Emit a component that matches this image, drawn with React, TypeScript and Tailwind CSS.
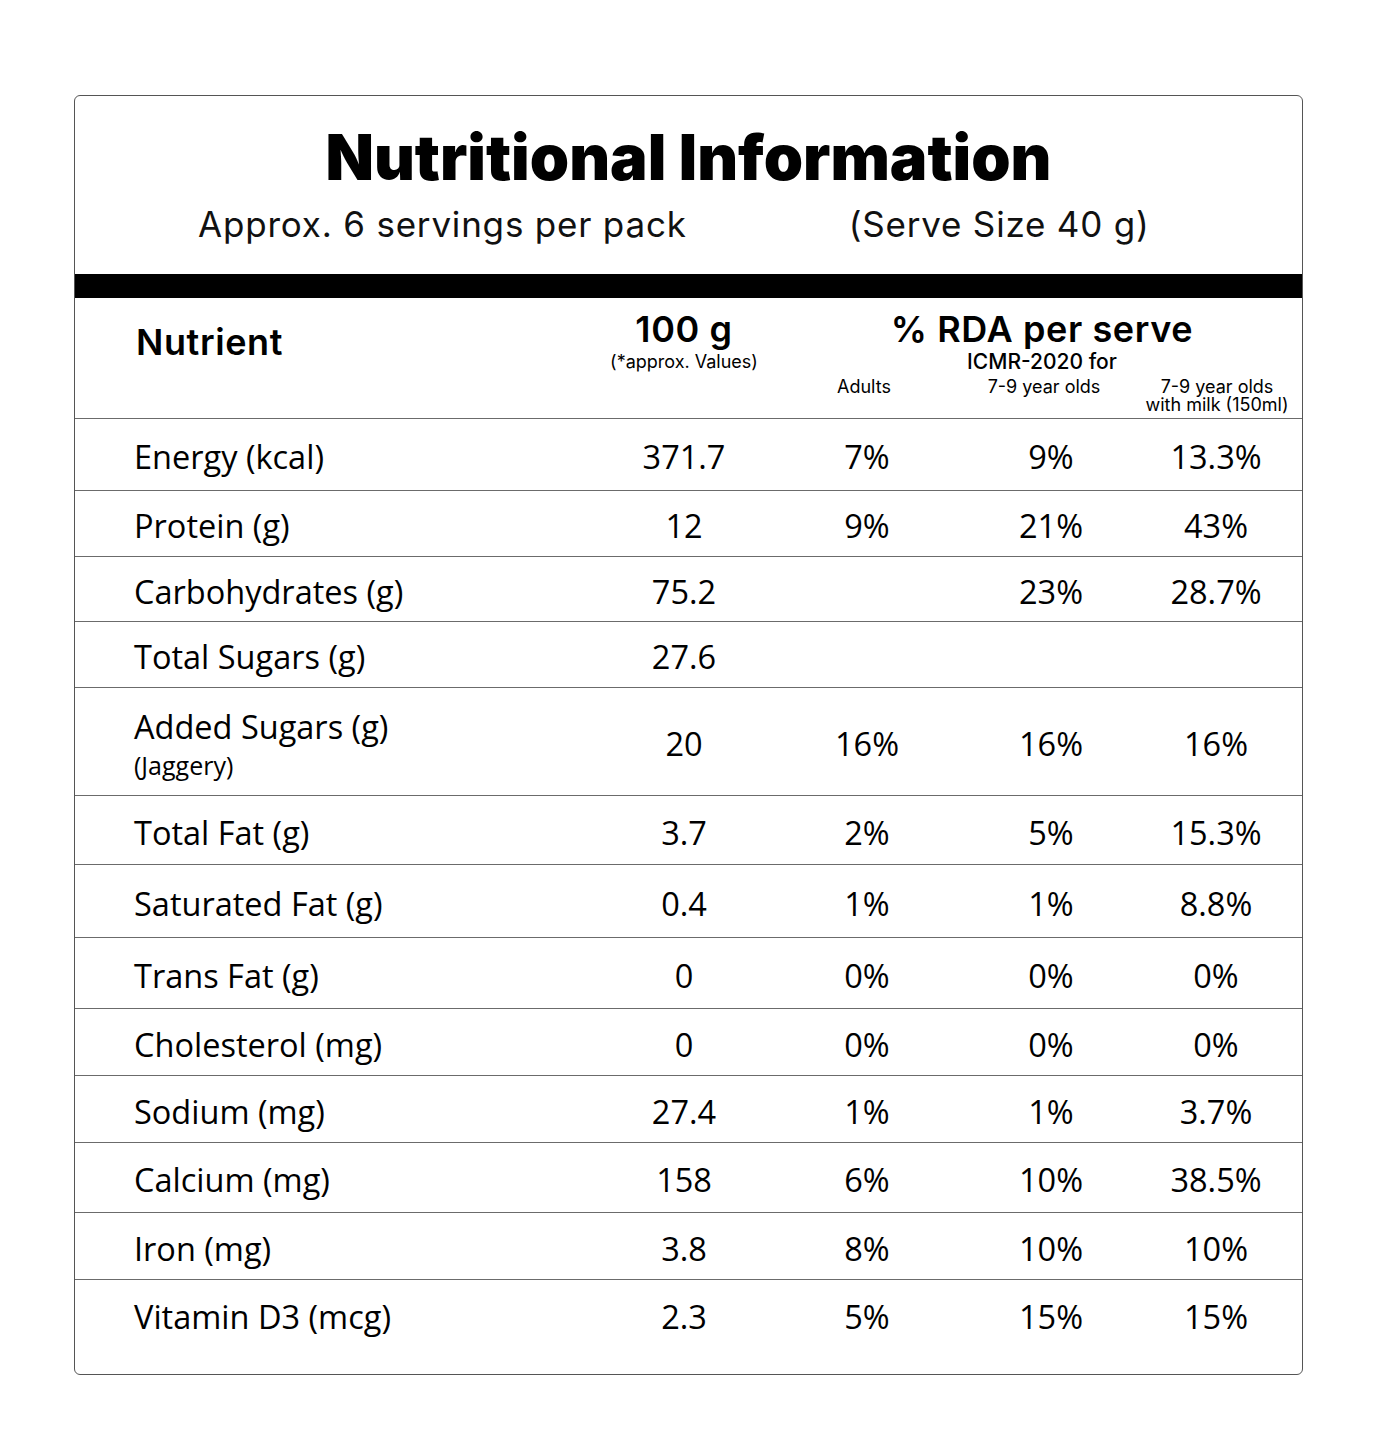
import type React from 'react'

type Row = {
  label: string
  note?: string
  per100: string
  adults: string
  kids: string
  milk: string
  h: number
}

const rows: Row[] = [
  { label: 'Energy (kcal)', per100: '371.7', adults: '7%', kids: '9%', milk: '13.3%', h: 72 },
  { label: 'Protein (g)', per100: '12', adults: '9%', kids: '21%', milk: '43%', h: 66 },
  { label: 'Carbohydrates (g)', per100: '75.2', adults: '', kids: '23%', milk: '28.7%', h: 65 },
  { label: 'Total Sugars (g)', per100: '27.6', adults: '', kids: '', milk: '', h: 66 },
  { label: 'Added Sugars (g)', note: '(Jaggery)', per100: '20', adults: '16%', kids: '16%', milk: '16%', h: 108 },
  { label: 'Total Fat (g)', per100: '3.7', adults: '2%', kids: '5%', milk: '15.3%', h: 69 },
  { label: 'Saturated Fat (g)', per100: '0.4', adults: '1%', kids: '1%', milk: '8.8%', h: 73 },
  { label: 'Trans Fat (g)', per100: '0', adults: '0%', kids: '0%', milk: '0%', h: 71 },
  { label: 'Cholesterol (mg)', per100: '0', adults: '0%', kids: '0%', milk: '0%', h: 67 },
  { label: 'Sodium (mg)', per100: '27.4', adults: '1%', kids: '1%', milk: '3.7%', h: 67 },
  { label: 'Calcium (mg)', per100: '158', adults: '6%', kids: '10%', milk: '38.5%', h: 70 },
  { label: 'Iron (mg)', per100: '3.8', adults: '8%', kids: '10%', milk: '10%', h: 67 },
  { label: 'Vitamin D3 (mcg)', per100: '2.3', adults: '5%', kids: '15%', milk: '15%', h: 68 },
]

const geo = "font-['Inter','Lato',sans-serif]"
const body = "font-['Open_Sans','Noto_Sans',sans-serif]"

function NutrientRow({ row, last }: { row: Row; last: boolean }): React.ReactElement {
  return (
    <div
      className={`grid grid-cols-[518px_182px_184px_184px_146px] items-center pt-[6px] text-[32.5px] text-black ${body} ${last ? '' : 'border-b border-[#6b6b6b]'}`}
      style={{ height: row.h }}
    >
      <div className="pl-[59px] leading-none">
        <div>{row.label}</div>
        {row.note && <div className="mt-[10px] text-[25px]">{row.note}</div>}
      </div>
      <div className="text-center leading-none">{row.per100}</div>
      <div className="text-center leading-none">{row.adults}</div>
      <div className="text-center leading-none">{row.kids}</div>
      <div className="text-center leading-none">{row.milk}</div>
    </div>
  )
}

export default function App(): React.ReactElement {
  return (
    <div className="min-h-[1443px] w-[1376px] bg-white pt-[95px] pl-[74px]">
      <div className="w-[1229px] overflow-hidden rounded-[6px] border border-[#555] pb-[26px]">
        {/* Title block */}
        <div className="flex h-[178px] flex-col items-center">
          <h1 className={`mt-[30px] text-[63px] font-black leading-none text-black ${geo}`}>
            Nutritional Information
          </h1>
          <div className={`mt-[18px] flex w-full text-[35px] leading-none tracking-[0.8px] text-[#111] ${geo}`}>
            <span className="ml-[123px]">Approx. 6 servings per pack</span>
            <span className="ml-[162px]">(Serve Size 40 g)</span>
          </div>
        </div>
        <div className="h-[24px] bg-black" />

        {/* Column headers */}
        <div className={`grid h-[121px] grid-cols-[518px_182px_184px_184px_146px] border-b border-[#6b6b6b] text-black ${geo}`}>
          <div className="pl-[61px] pt-[26px] text-[36px] font-semibold leading-none tracking-[0.6px]">Nutrient</div>
          <div className="flex flex-col items-center pt-[13px]">
            <span className="text-[36px] font-semibold leading-none tracking-[0.6px]">100 g</span>
            <span className="mt-[6px] text-[18px] leading-none">(*approx. Values)</span>
          </div>
          <div className="col-span-3 flex flex-col items-center pt-[13px] pl-[20px]">
            <span className="text-[36px] font-semibold leading-none tracking-[0.6px]">% RDA per serve</span>
            <span className="mt-[4px] text-[21px] font-medium leading-none">ICMR-2020 for</span>
            <div className="mt-[6px] grid w-full grid-cols-[138px_222px_124px] whitespace-nowrap text-[18px] leading-[18px]">
              <span className="text-center">Adults</span>
              <span className="text-center">7-9 year olds</span>
              <div className="flex flex-col items-center">
                <span>7-9 year olds</span>
                <span>with milk (150ml)</span>
              </div>
            </div>
          </div>
        </div>

        {rows.map((r, i) => (
          <NutrientRow key={r.label} row={r} last={i === rows.length - 1} />
        ))}
      </div>
    </div>
  )
}
